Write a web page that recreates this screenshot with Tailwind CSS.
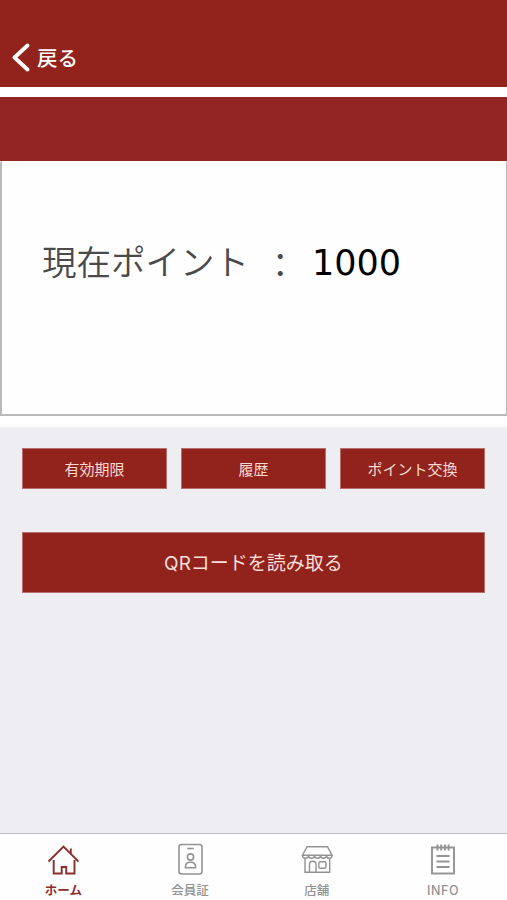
<!DOCTYPE html>
<html lang="ja">

<head>
    <meta charset="UTF-8">
    <meta name="viewport" content="width=device-width, initial-scale=1.0">
    <script src="https://cdn.jsdelivr.net/npm/@tailwindcss/browser@4"></script>
    <title>現在ポイント</title>
</head>

<body class="bg-[#eeedf2] font-['Inter','Noto_Sans_CJK_JP',sans-serif]">
    <div class="flex flex-col h-[900px] w-[507px] overflow-hidden">
        <!-- Header -->
        <header class="h-[87px] shrink-0 bg-[#91231c] pt-[42px] pl-3">
            <button class="flex items-center gap-[7px] h-[31px] text-white">
                <svg class="w-[18px] h-[29px]" viewBox="0 0 18 29" fill="none" stroke="currentColor" stroke-width="3.8" stroke-linecap="round" stroke-linejoin="round">
                    <path d="M15.500 2.500 2.500 14.500l13 12" />
                </svg>
                <span class="pt-px text-[20.5px] leading-[31px] font-medium">戻る</span>
            </button>
        </header>

        <!-- Point card -->
        <section class="h-[340px] shrink-0 bg-white pt-[10px]">
            <div class="h-16 bg-[#922424]"></div>
            <div class="flex h-[255px] rounded-t-[2px] border-2 border-t-0 border-r-[1px] border-[#bababa] bg-[#fefefe] pt-[76px] pl-10 leading-[52px]">
                <span class="w-[204px] text-[34.5px] font-[350] text-[#4a4a4a] whitespace-nowrap">現在ポイント</span>
                <span class="w-[35px] ml-[17px] text-[34.5px] font-[350] text-[#4a4a4a] font-['Noto_Sans_CJK_JP',sans-serif]">：</span>
                <span class="ml-[14px] text-[35px] text-black font-['DejaVu_Sans',sans-serif]">1000</span>
            </div>
        </section>

        <!-- Actions -->
        <main class="flex-1 px-[22px] pt-[21px]">
            <div class="grid grid-cols-3 gap-[14px] text-[15px] text-[#f7d9d2]">
                <button class="h-[41px] pt-[3px] border border-[#b5706c] bg-[#91231c]">有効期限</button>
                <button class="h-[41px] pt-[3px] border border-[#b5706c] bg-[#91231c]">履歴</button>
                <button class="h-[41px] pt-[3px] border border-[#b5706c] bg-[#91231c]">ポイント交換</button>
            </div>
            <button class="mt-[43px] h-[61px] w-full pt-[3px] border border-[#b5706c] bg-[#91231c] text-[19px] text-[#f9dfd9]">QRコードを読み取る</button>
        </main>

        <!-- Tab bar -->
        <nav class="grid grid-cols-4 h-[67px] shrink-0 border-t border-[#bfbfc2] bg-[#fefefe] text-[12.5px] font-medium text-[#939393]">
            <a class="flex flex-col items-center pt-[9px] text-[#8c2c2c]">
                <svg class="w-8 h-8" viewBox="0 0 32 32" fill="none" stroke="currentColor" stroke-width="1.9">
                    <path d="M1.500 18.500 16.500 3.500l15 15M23.800 10.500V5.500M6.700 17v13.500h8V24h4.500v6.500h8.300V17" />
                </svg>
                <span class="mt-[5px] leading-[22px] font-bold">ホーム</span>
            </a>
            <a class="flex flex-col items-center pt-[9px]">
                <svg class="w-8 h-8" viewBox="0 0 32 32" fill="none" stroke="currentColor" stroke-width="1.6">
                    <rect x="5" y="1.500" width="23" height="29.500" rx="2.500" />
                    <path d="M13.300 5.500h6.500" />
                    <circle cx="16.500" cy="14" r="3.100" />
                    <path d="M11.500 24.800v-1.300c0-2.700 2-4.200 5-4.200s5 1.500 5 4.200v1.300Z" />
                </svg>
                <span class="mt-[5px] leading-[22px]">会員証</span>
            </a>
            <a class="flex flex-col items-center pt-[9px]">
                <svg class="w-8 h-8" viewBox="0 0 32 32" fill="none" stroke="currentColor" stroke-width="1.4">
                    <path d="M6 3.700h20.500l4.500 8.500H1.500ZM4 15.500v13.700h24.700V15.500" />
                    <path d="M1.500 12.200c0 4 6 4 6 0 0 4 6 4 6 0 0 4 6 4 6 0 0 4 6 4 6 0 0 4 5.500 4 5.500 0" />
                    <path d="M8.500 29v-7.500c0-4.300 6.500-4.300 6.500 0V29" />
                    <rect x="17.800" y="18.700" width="7.200" height="6.500" rx="1.500" />
                </svg>
                <span class="mt-[5px] leading-[22px]">店舗</span>
            </a>
            <a class="flex flex-col items-center pt-[9px] pr-px">
                <svg class="w-8 h-8" viewBox="0 0 32 32" fill="none" stroke="currentColor" stroke-width="1.900">
                    <rect x="5" y="4.500" width="22" height="26" />
                    <path d="M10.500 1.500v6M14.200 1.500v6M17.900 1.500v6M21.600 1.500v6M9.500 13h13M9.500 18.500h13M9.500 24h13" />
                </svg>
                <span class="mt-[5px] leading-[22px] tracking-[0.6px]">INFO</span>
            </a>
        </nav>
    </div>
</body>

</html>
